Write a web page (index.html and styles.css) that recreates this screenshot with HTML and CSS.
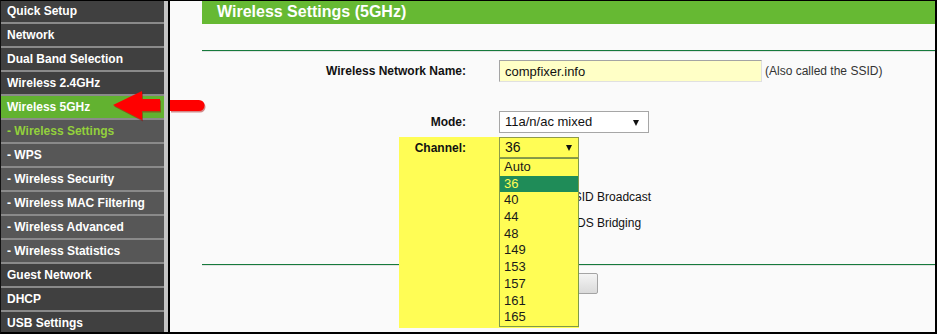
FILE: index.html
```html
<!DOCTYPE html>
<html lang="en">
<head>
    <meta charset="UTF-8">
    <meta name="viewport" content="width=device-width, initial-scale=1.0">
    <title>Wireless Settings (5GHz)</title>
    <link rel="stylesheet" href="styles.css">
</head>
<body>
    <div class="frame">
        <div class="sidebar">
            <div class="menu-item">Quick Setup</div>
            <div class="menu-item">Network</div>
            <div class="menu-item">Dual Band Selection</div>
            <div class="menu-item">Wireless 2.4GHz</div>
            <div class="menu-item active">Wireless 5GHz</div>
            <div class="menu-item sub current">- Wireless Settings</div>
            <div class="menu-item sub">- WPS</div>
            <div class="menu-item sub">- Wireless Security</div>
            <div class="menu-item sub">- Wireless MAC Filtering</div>
            <div class="menu-item sub">- Wireless Advanced</div>
            <div class="menu-item sub">- Wireless Statistics</div>
            <div class="menu-item">Guest Network</div>
            <div class="menu-item">DHCP</div>
            <div class="menu-item">USB Settings</div>
        </div>

        <div class="content">
            <div class="title-bar">Wireless Settings (5GHz)</div>
            <div class="rule rule-top"></div>

            <div class="row row-name">
                <label class="label">Wireless Network Name:</label>
                <div class="value">
                    <input class="text-input" type="text" value="compfixer.info">
                    <span class="hint">(Also called the SSID)</span>
                </div>
            </div>

            <div class="row row-mode">
                <label class="label">Mode:</label>
                <div class="value">
                    <div class="select select-mode">11a/n/ac mixed<span class="arrow"></span></div>
                </div>
            </div>

            <div class="row row-channel">
                <label class="label">Channel:</label>
                <div class="value">
                    <div class="select select-channel">36<span class="arrow"></span></div>
                    <ul class="dropdown">
                        <li>Auto</li>
                        <li class="selected">36</li>
                        <li>40</li>
                        <li>44</li>
                        <li>48</li>
                        <li>149</li>
                        <li>153</li>
                        <li>157</li>
                        <li>161</li>
                        <li>165</li>
                    </ul>
                </div>
            </div>

            <div class="row row-check first-check">
                <span class="label"></span>
                <div class="value">
                    <input class="check" type="checkbox" checked>
                    <span class="check-text">Enable SSID Broadcast</span>
                </div>
            </div>
            <div class="row row-check">
                <span class="label"></span>
                <div class="value">
                    <input class="check" type="checkbox">
                    <span class="check-text">Enable WDS Bridging</span>
                </div>
            </div>

            <div class="rule rule-bottom"></div>

            <div class="row row-button">
                <span class="label"></span>
                <div class="value">
                    <button class="button">Save</button>
                </div>
            </div>

            <div class="highlight"></div>
        </div>

        <svg class="pointer" width="100" height="40" viewBox="0 0 100 40">
            <g fill="#a30000" opacity="0.45" transform="translate(1 1.5)">
                <path d="M3 19 L32 5 L32 13 L50 13 L50 25 L32 25 L32 34 Z"/>
                <path d="M60 14 L89 14 A5.5 5.5 0 0 1 89 25 L60 25 Z"/>
            </g>
            <g fill="#ff0000">
                <path d="M3 19 L32 5 L32 13 L50 13 L50 25 L32 25 L32 34 Z"/>
                <path d="M60 14 L89 14 A5.5 5.5 0 0 1 89 25 L60 25 Z"/>
            </g>
        </svg>
    </div>
</body>
</html>
```

FILE: styles.css
```css
body {
    margin: 0;
    background-color: #fafafa;
    font-family: "Liberation Sans", Arial, sans-serif;
}
.frame {
    position: relative;
    display: flex;
    width: 937px;
    height: 334px;
    box-sizing: border-box;
    border-top: 1px solid #000;
    border-left: 1px solid #111;
    border-right: 2px solid #000;
    border-bottom: 2px solid #000;
    overflow: hidden;
}
.sidebar {
    width: 163px;
    flex-shrink: 0;
    border-right: 4px solid #c4c4c4;
    background-color: #8a8a8a;
    overflow: hidden;
}
.menu-item {
    height: 22px;
    line-height: 22px;
    padding-left: 6px;
    border-bottom: 2px solid #8a8a8a;
    background-color: #404040;
    color: #fff;
    font-size: 12px;
    font-weight: bold;
    white-space: nowrap;
}
.menu-item:first-child {
    height: 21px;
    line-height: 20px;
}
.menu-item.sub {
    background-color: #575757;
}
.menu-item.active {
    background-color: #62b230;
}
.menu-item.current {
    color: #93d03c;
}
.content {
    position: relative;
    flex: 1;
    border-left: 2px solid #000;
    padding-left: 32px;
    background-color: #fafafa;
}
.title-bar {
    height: 23px;
    line-height: 22px;
    padding-left: 15px;
    background-color: #66b933;
    color: #fff;
    font-size: 16px;
    font-weight: bold;
}
.rule {
    height: 1px;
    background-color: #167a3c;
    box-shadow: 0 1px 0 #e2e2e2;
}
.rule-top {
    margin-top: 26px;
}
.row {
    display: grid;
    grid-template-columns: 264px 1fr;
    column-gap: 33px;
    align-items: center;
}
.label {
    text-align: right;
    font-size: 12px;
    font-weight: bold;
    color: #111;
}
.value {
    position: relative;
    display: flex;
    align-items: center;
    font-size: 12px;
    color: #222;
}
.row-name {
    margin-top: 9px;
}
.text-input {
    width: 263px;
    height: 22px;
    box-sizing: border-box;
    padding: 0 5px;
    margin: 0;
    border: 1px solid #a4a4a4;
    border-right-color: #e0e0e0;
    border-bottom-color: #e0e0e0;
    background-color: #ffffc6;
    font-family: "Liberation Sans", Arial, sans-serif;
    font-size: 13px;
    color: #111;
}
.hint {
    margin-left: 3px;
    color: #333;
}
.row-mode {
    margin-top: 29px;
}
.select {
    position: relative;
    box-sizing: border-box;
    padding-left: 5px;
    font-size: 13px;
    color: #111;
}
.select-mode {
    width: 150px;
    height: 22px;
    line-height: 20px;
    border: 1px solid #a6a6a6;
    background-color: #fff;
}
.arrow {
    position: absolute;
    top: 8px;
    right: 9px;
    border-left: 3px solid transparent;
    border-right: 3px solid transparent;
    border-top: 6px solid #111;
}
.row-channel {
    position: relative;
    z-index: 2;
    margin-top: 4px;
}
.select-channel {
    width: 80px;
    height: 21px;
    line-height: 19px;
    border: 1px solid #8e9a48;
    background-color: #fffd55;
    font-size: 14px;
}
.select-channel .arrow {
    top: 7px;
    right: 6px;
}
.dropdown {
    position: absolute;
    top: 21px;
    left: 0;
    width: 80px;
    box-sizing: border-box;
    margin: 0;
    padding: 0;
    list-style: none;
    border: 1px solid #7f9a48;
    background-color: #fffd55;
}
.dropdown li {
    height: 16.7px;
    line-height: 16.7px;
    padding-left: 4px;
    font-size: 13px;
    color: #1a1a1a;
}
.dropdown li.selected {
    background-color: #1f8c58;
    color: #fffd55;
}
.row-check {
    height: 26px;
}
.first-check {
    margin-top: 26px;
}
.check {
    width: 13px;
    height: 13px;
    margin: 0 8px 0 5px;
}
.check-text {
    font-size: 12px;
    color: #111;
}
.rule-bottom {
    margin-top: 28px;
}
.row-button {
    margin-top: 8px;
}
.button {
    width: 80px;
    height: 21px;
    margin-left: 19px;
    border: 1px solid #a4a4a4;
    border-radius: 2px;
    background: linear-gradient(#f4f4f4, #dadada);
    font-family: "Liberation Sans", Arial, sans-serif;
    font-size: 12px;
    color: #111;
}
.highlight {
    position: absolute;
    top: 136px;
    left: 229px;
    width: 180px;
    height: 191px;
    z-index: 1;
    background-color: #fffd55;
}
.pointer {
    position: absolute;
    top: 85px;
    left: 109px;
    z-index: 5;
}
```
